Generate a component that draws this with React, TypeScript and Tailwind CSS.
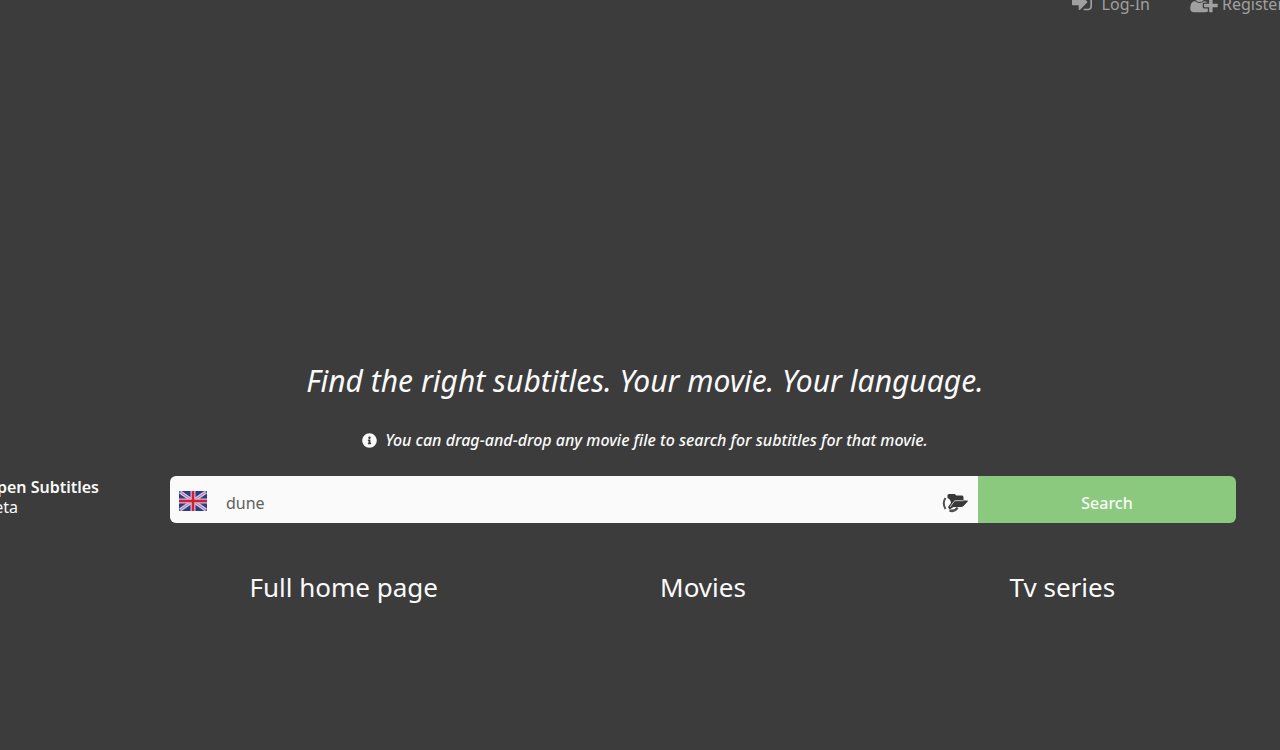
import { useState } from "react";
import { FaInfoCircle } from "react-icons/fa";

function SignInIcon() {
  return (
    <svg viewBox="0 0 1536 1792" className="h-6 w-5" fill="currentColor" aria-hidden="true">
      <path d="M1184 896q0 26-19 45l-544 544q-19 19-45 19t-45-19-19-45v-288h-448q-26 0-45-19t-19-45v-384q0-26 19-45t45-19h448v-288q0-26 19-45t45-19 45 19l544 544q19 19 19 45zM1536 544v704q0 119-84.5 203.5t-203.5 84.5h-320q-13 0-22.5-9.5t-9.5-22.500q0-4-1-20t-.5-26.500 3-23.500 10-19.500 20.500-6.500h320q66 0 113-47t47-113v-704q0-66-47-113t-113-47h-312l-11.500-1-11.500-3-8-5.500-7-9-2-13.500q0-4-1-20t-.5-26.500 3-23.500 10-19.500 20.500-6.500h320q119 0 203.500 84.500t84.500 203.500z" />
    </svg>
  );
}

function UserPlusIcon() {
  return (
    <svg viewBox="0 0 2048 1792" className="h-6 w-7" fill="currentColor" aria-hidden="true">
      <path d="M704 896q-159 0-271.500-112.500t-112.500-271.500 112.500-271.500 271.500-112.500 271.500 112.500 112.500 271.500-112.500 271.500-271.500 112.500zM1664 1024h352q13 0 22.500 9.500t9.500 22.500v192q0 13-9.500 22.500t-22.500 9.500h-352v352q0 13-9.500 22.500t-22.500 9.500h-192q-13 0-22.500-9.500t-9.500-22.500v-352h-352q-13 0-22.500-9.500t-9.500-22.500v-192q0-13 9.500-22.500t22.500-9.500h352v-352q0-13 9.500-22.500t22.500-9.500h192q13 0 22.500 9.500t9.500 22.500v352zM928 1248q0 52 38 90t90 38h256v238q-68 50-171 50h-874q-121 0-194-69t-73-190q0-53 3.500-103.500t14-109 26.500-108.500 43-97.500 62-81 85.500-53.500 111.500-20q19 0 39 17 79 61 154.500 91.500t164.500 30.500 164.500-30.500 154.500-91.500q20-17 39-17 132 0 217 96h-223q-52 0-90 38t-38 90v192z" />
    </svg>
  );
}

function UnionFlag() {
  return (
    <svg viewBox="0 0 28 20" className="h-5 w-7 shrink-0" role="img" aria-label="English">
      <rect width="28" height="20" rx="1" fill="#2b3a8c" />
      <path d="M1 1L27 19M27 1L1 19" stroke="#cfc6e0" strokeWidth="3.500" />
      <path d="M1 1L27 19M27 1L1 19" stroke="#c07090" strokeWidth="1" />
      <path d="M14 0V20M0 10H28" stroke="#dcb4c8" strokeWidth="5" />
      <path d="M14 0V20M0 10H28" stroke="#cf2035" strokeWidth="2.500" />
    </svg>
  );
}

function OpenFileIcon() {
  return (
    <svg viewBox="0 0 26 20" className="h-5 w-[26px]" aria-hidden="true">
      <path d="M3.500 5Q0 10 3.500 16" fill="none" stroke="#505050" strokeWidth="2" />
      <path d="M7.500 17.500Q13 19 15.500 14.500" fill="none" stroke="#505050" strokeWidth="2.500" />
      <path d="M5.500 2Q6 1 7.500 1h5q1 0 1.500 1.500h6q1.500 0 1.500 2v3h4q.7.300 0 1.200l-4 4.300q-1 1-2.500 1h-7.500l-4 2.500-1.500-2.500 3-4q-.5-4-3.500-5z" fill="#383838" />
      <path d="M8 14l4-5.500Q12.500 7.700 14 7.700h7.500" fill="none" stroke="#d8d8d8" strokeWidth="0.900" />
    </svg>
  );
}

export default function App() {
  const [query, setQuery] = useState("dune");

  return (
    <div className="min-h-screen overflow-hidden bg-[#3c3c3c] font-['Noto_Sans',sans-serif] text-[#fafafa]">
      <header className="-mt-2.5 -mr-1 flex h-7 justify-end gap-10 text-base text-[#a0a0a0]">
        <a href="#login" className="flex items-start gap-2.5">
          <SignInIcon />
          <span className="pt-0.5">Log-In</span>
        </a>
        <a href="#register" className="flex items-start gap-1">
          <UserPlusIcon />
          <span className="pt-0.5">Register</span>
        </a>
      </header>

      <main className="pt-[340px]">
        <div className="pl-2.5 text-center italic">
          <h1 className="text-3xl leading-[46px]">Find the right subtitles. Your movie. Your language.</h1>
          <p className="mt-6 flex items-center justify-center gap-2 text-base leading-6 font-medium">
            <FaInfoCircle className="size-[15px]" aria-hidden="true" />
            You can drag-and-drop any movie file to search for subtitles for that movie.
          </p>
        </div>

        <div className="mt-6 flex pr-11">
          <a href="#home" className="mr-[71px] flex w-[99px] shrink-0 justify-end pt-px text-base leading-5 whitespace-nowrap">
            <span>
              <strong className="block font-semibold">Open Subtitles</strong>
              beta
            </span>
          </a>
          <div className="min-w-0 flex-1">
            <form className="flex h-[47px] overflow-hidden rounded-md" onSubmit={(e) => e.preventDefault()}>
              <div className="flex min-w-0 flex-1 items-center bg-[#fafafa] pt-1.5 pr-2.5 pl-[9px]">
                <span className="pb-1">
                  <UnionFlag />
                </span>
                <input
                  type="text"
                  aria-label="Search subtitles"
                  value={query}
                  onChange={(e) => setQuery(e.target.value)}
                  className="ml-[19px] min-w-0 flex-1 bg-transparent text-base text-[#606060] outline-none"
                />
                <button type="button" aria-label="Open a movie file">
                  <OpenFileIcon />
                </button>
              </div>
              <button type="submit" className="w-[258px] bg-[#8bc97e] pt-1.5 text-base font-medium">
                Search
              </button>
            </form>
            <nav className="mt-11 grid grid-cols-3 gap-3 text-center text-[26px] leading-10">
              <a href="#full">Full home page</a>
              <a href="#movies">Movies</a>
              <a href="#series">Tv series</a>
            </nav>
          </div>
        </div>
      </main>
    </div>
  );
}
